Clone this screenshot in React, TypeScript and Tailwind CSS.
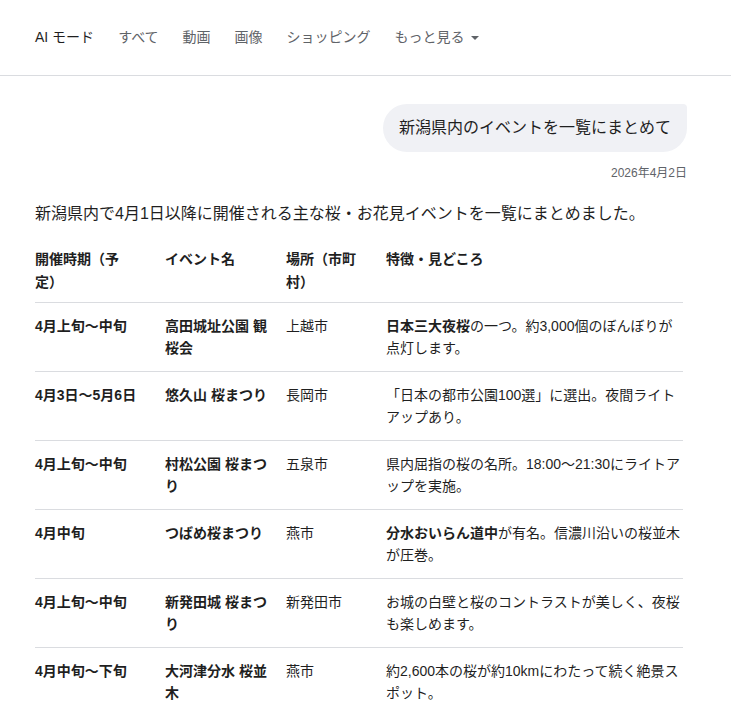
const rows = [
  {
    period: "4月上旬〜中旬",
    name: "高田城址公園 観桜会",
    place: "上越市",
    note: (
      <>
        <b className="font-bold">日本三大夜桜</b>の一つ。約3,000個のぼんぼりが点灯します。
      </>
    ),
  },
  {
    period: "4月3日〜5月6日",
    name: "悠久山 桜まつり",
    place: "長岡市",
    note: <>「日本の都市公園100選」に選出。夜間ライトアップあり。</>,
  },
  {
    period: "4月上旬〜中旬",
    name: "村松公園 桜まつり",
    place: "五泉市",
    note: <>県内屈指の桜の名所。18:00〜21:30にライトアップを実施。</>,
  },
  {
    period: "4月中旬",
    name: "つばめ桜まつり",
    place: "燕市",
    note: (
      <>
        <b className="font-bold">分水おいらん道中</b>が有名。信濃川沿いの桜並木が圧巻。
      </>
    ),
  },
  {
    period: "4月上旬〜中旬",
    name: "新発田城 桜まつり",
    place: "新発田市",
    note: <>お城の白壁と桜のコントラストが美しく、夜桜も楽しめます。</>,
  },
  {
    period: "4月中旬〜下旬",
    name: "大河津分水 桜並木",
    place: "燕市",
    note: <>約2,600本の桜が約10kmにわたって続く絶景スポット。</>,
  },
];

const tabs = ["すべて", "動画", "画像", "ショッピング"];

export default function App() {
  return (
    <div className="min-h-[716px] bg-white text-[#1f1f1f] [font-family:'Liberation_Sans','Noto_Sans_CJK_JP',sans-serif]">
      <nav className="flex h-[76px] items-center border-b border-[#dadce0] pl-[35px] text-[14px]">
        <span className="mr-[24px] text-[#1f1f1f]">AI モード</span>
        {tabs.map((t) => (
          <span key={t} className="mr-[24px] text-[#5f6368]">
            {t}
          </span>
        ))}
        <span className="flex items-center text-[#5f6368]">
          もっと見る
          <svg className="ml-[6px]" width="8" height="4" viewBox="0 0 8 4">
            <path d="M0 0h8L4 4z" fill="#5f6368" />
          </svg>
        </span>
      </nav>

      <main className="pl-[35px] pr-[44px]">
        <div className="flex justify-end pt-[28px]">
          <div className="flex h-[48px] items-center rounded-[24px] rounded-tr-[4px] bg-[#f0f1f5] px-[16px] text-[16px] text-[#1f1f1f]">
            新潟県内のイベントを一覧にまとめて
          </div>
        </div>
        <div className="mt-[14px] text-right text-[12px] leading-[14px] text-[#5f6368]">
          2026年4月2日
        </div>

        <p className="mt-[21px] text-[16px] leading-[26px]">
          新潟県内で4月1日以降に開催される主な桜・お花見イベントを一覧にまとめました。
        </p>

        <table className="mt-[21px] w-[648px] table-fixed border-collapse text-[14px] leading-[22px]">
          <colgroup>
            <col className="w-[130px]" />
            <col className="w-[121px]" />
            <col className="w-[100px]" />
            <col className="w-[297px]" />
          </colgroup>
          <thead>
            <tr className="border-b border-[#dadce0] text-left font-bold leading-[23px]">
              <th className="pb-[8px] pr-[27px] align-top">開催時期（予定）</th>
              <th className="pb-[8px] pr-[11px] align-top">イベント名</th>
              <th className="pb-[8px] pr-[16px] align-top">場所（市町村）</th>
              <th className="pb-[8px] align-top">特徴・見どころ</th>
            </tr>
          </thead>
          <tbody>
            {rows.map((r, i) => (
              <tr
                key={i}
                className={i < rows.length - 1 ? "border-b border-[#dadce0]" : ""}
              >
                <td className="py-[12px] pr-[27px] align-top font-bold">{r.period}</td>
                <td className="py-[12px] pr-[11px] align-top font-bold">{r.name}</td>
                <td className="py-[12px] pr-[16px] align-top">{r.place}</td>
                <td className="py-[12px] align-top">{r.note}</td>
              </tr>
            ))}
          </tbody>
        </table>
      </main>
    </div>
  );
}
